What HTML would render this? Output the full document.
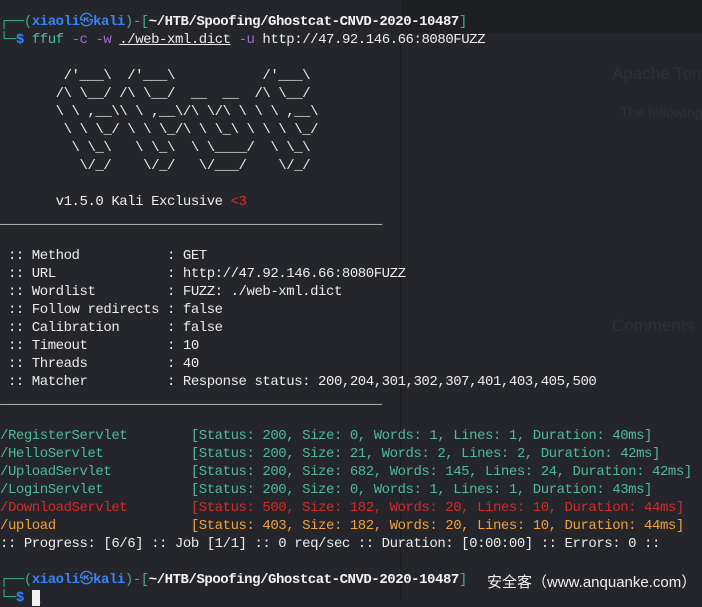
<!DOCTYPE html>
<html><head><meta charset="utf-8"><style>
html,body{margin:0;padding:0;width:702px;height:600px;overflow:hidden;background:#24262b;}
.bar{position:absolute;left:401px;top:0;width:301px;height:33px;background:#1d1f23;}
.div{position:absolute;left:400px;top:33px;width:1px;height:567px;background:#1b1c20;}
.ghost{position:absolute;font-family:"Liberation Sans",sans-serif;color:#2f3137;font-size:16px;white-space:nowrap;}
pre{position:absolute;left:0;top:13px;margin:0;font-family:"Liberation Mono","Noto Sans CJK SC",monospace;font-size:14px;letter-spacing:-0.45px;line-height:18px;color:#ececec;white-space:pre;}
.g{color:#3fae8a}.b{color:#3b82f6;font-weight:bold}.w{color:#f2f2f2;font-weight:bold}
.c{color:#4dc0a0}.p{color:#a070c8}.u{text-decoration:underline}
.t{color:#4fb99a}.r{color:#d42a2a}.o{color:#f0a040}.rr{color:#d42a2a}
.cur{background:#f2f2f2;color:#f2f2f2}
.wm{position:absolute;left:487px;top:571px;font-family:"Liberation Sans","Noto Sans CJK SC",sans-serif;font-size:15px;color:#f0f0f0;}
</style></head><body>
<div class="bar"></div><div class="div"></div>
<div class="ghost" style="left:612px;top:64px;font-size:17px">Apache Tomcat</div>
<div class="ghost" style="left:620px;top:104px;font-size:14px">The following</div>
<div class="ghost" style="left:612px;top:316px;font-size:17px">Comments</div>
<pre><span class="g">┌──(</span><span class="b">xiaoli㉿kali</span><span class="g">)-[</span><span class="w">~/HTB/Spoofing/Ghostcat-CNVD-2020-10487</span><span class="g">]</span>
<span class="g">└─</span><span class="b">$</span> <span class="c">ffuf</span> <span class="p">-c</span> <span class="p">-w</span> <span class="u">./web-xml.dict</span> <span class="p">-u</span> http://47.92.146.66:8080FUZZ

        /'___\  /'___\           /'___\
       /\ \__/ /\ \__/  __  __  /\ \__/
       \ \ ,__\\ \ ,__\/\ \/\ \ \ \ ,__\
        \ \ \_/ \ \ \_/\ \ \_\ \ \ \ \_/
         \ \_\   \ \_\  \ \____/  \ \_\
          \/_/    \/_/   \/___/    \/_/

       v1.5.0 Kali Exclusive <span class="rr">&lt;3</span>
________________________________________________

 :: Method           : GET
 :: URL              : http://47.92.146.66:8080FUZZ
 :: Wordlist         : FUZZ: ./web-xml.dict
 :: Follow redirects : false
 :: Calibration      : false
 :: Timeout          : 10
 :: Threads          : 40
 :: Matcher          : Response status: 200,204,301,302,307,401,403,405,500
________________________________________________

<span class="t">/RegisterServlet        [Status: 200, Size: 0, Words: 1, Lines: 1, Duration: 40ms]</span>
<span class="t">/HelloServlet           [Status: 200, Size: 21, Words: 2, Lines: 2, Duration: 42ms]</span>
<span class="t">/UploadServlet          [Status: 200, Size: 682, Words: 145, Lines: 24, Duration: 42ms]</span>
<span class="t">/LoginServlet           [Status: 200, Size: 0, Words: 1, Lines: 1, Duration: 43ms]</span>
<span class="r">/DownloadServlet        [Status: 500, Size: 182, Words: 20, Lines: 10, Duration: 44ms]</span>
<span class="o">/upload                 [Status: 403, Size: 182, Words: 20, Lines: 10, Duration: 44ms]</span>
:: Progress: [6/6] :: Job [1/1] :: 0 req/sec :: Duration: [0:00:00] :: Errors: 0 ::

<span class="g">┌──(</span><span class="b">xiaoli㉿kali</span><span class="g">)-[</span><span class="w">~/HTB/Spoofing/Ghostcat-CNVD-2020-10487</span><span class="g">]</span>
<span class="g">└─</span><span class="b">$</span> <span class="cur">_</span></pre>
<div class="wm">安全客（www.anquanke.com）</div>
</body></html>
